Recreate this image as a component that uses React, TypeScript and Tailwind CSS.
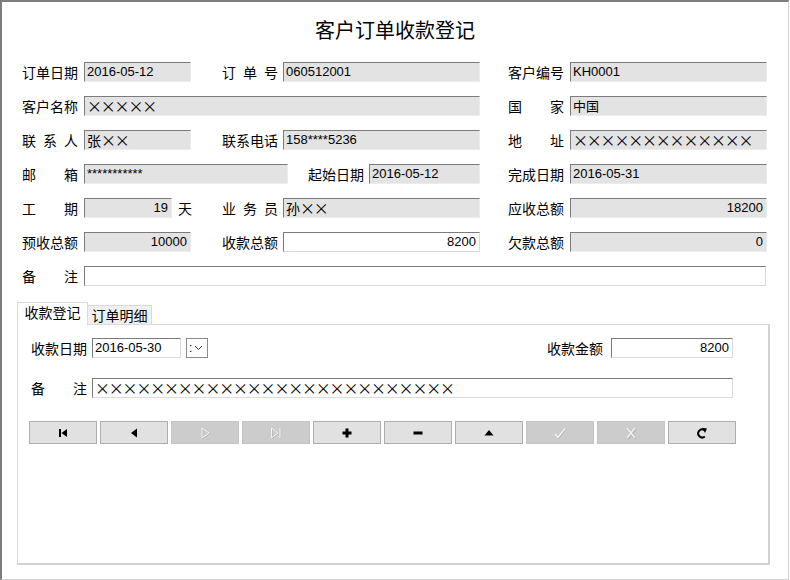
import React from 'react'

const CJK = "font-['Noto_Sans_CJK_SC','Liberation_Sans',sans-serif]"
const TXT = "font-['Liberation_Sans','Noto_Sans_CJK_SC',sans-serif]"

// label spread over 56px like the old WinForms forms
function Label({ text, className = '' }: { text: string; className?: string }) {
  return (
    <div className={`flex h-[20px] w-[56px] shrink-0 items-center justify-between text-[14px] leading-[20px] text-black ${CJK} ${className}`}>
      {text.split('').map((c, i) => (
        <span key={i}>{c}</span>
      ))}
    </div>
  )
}

function Xs({ n }: { n: number }) {
  return (
    <span className="font-['Noto_Sans_CJK_SC',sans-serif] text-[15px] leading-[18px] tracking-[-1.2px] text-black">
      {'×'.repeat(n)}
    </span>
  )
}

interface BoxProps {
  width: string
  value?: React.ReactNode
  right?: boolean
  white?: boolean
  className?: string
}

function Box({ width, value, right, white, className = '' }: BoxProps) {
  return (
    <div
      className={`flex h-[20px] shrink-0 items-center overflow-hidden whitespace-nowrap border-t border-l border-t-[#7b7b7b] border-l-[#7b7b7b] border-r border-b px-[2px] text-[13px] leading-[18px] text-black ${TXT} ${
        white ? 'bg-white border-r-[#dadada] border-b-[#dadada]' : 'bg-[#e3e3e3] border-r-[#ececec] border-b-[#ececec]'
      } ${right ? 'justify-end pr-[3px]' : ''} ${width} ${className}`}
    >
      {value}
    </div>
  )
}

function Icon({ kind }: { kind: string }) {
  const off = '#f4f4f4'
  switch (kind) {
    case 'first':
      return (
        <svg width="10" height="10" viewBox="0 0 10 10">
          <rect x="1" y="1" width="2" height="8" fill="#000" />
          <polygon points="9,1 9,9 3.5,5" fill="#000" />
        </svg>
      )
    case 'prev':
      return (
        <svg width="10" height="10" viewBox="0 0 10 10">
          <polygon points="8,0.5 8,9.5 2,5" fill="#000" />
        </svg>
      )
    case 'next':
      return (
        <svg width="12" height="12" viewBox="0 0 12 12">
          <polygon points="3,1 3,11 10,6" fill="none" stroke="#b5b5b5" strokeWidth="1" transform="translate(0.7 0.7)" />
          <polygon points="3,1 3,11 10,6" fill="none" stroke={off} strokeWidth="1" />
        </svg>
      )
    case 'last':
      return (
        <svg width="12" height="12" viewBox="0 0 12 12">
          <g transform="translate(0.7 0.7)" stroke="#b5b5b5" fill="none">
            <polygon points="1.5,1 1.5,11 8,6" />
            <line x1="10" y1="1" x2="10" y2="11" />
          </g>
          <g stroke={off} fill="none">
            <polygon points="1.5,1 1.5,11 8,6" />
            <line x1="10" y1="1" x2="10" y2="11" />
          </g>
        </svg>
      )
    case 'add':
      return (
        <svg width="10" height="10" viewBox="0 0 10 10">
          <rect x="3.5" y="0.5" width="3" height="9" fill="#000" />
          <rect x="0.5" y="3.5" width="9" height="3" fill="#000" />
        </svg>
      )
    case 'del':
      return (
        <svg width="10" height="10" viewBox="0 0 10 10">
          <rect x="0.5" y="3.5" width="9" height="3" fill="#000" />
        </svg>
      )
    case 'up':
      return (
        <svg width="10" height="10" viewBox="0 0 10 10">
          <polygon points="0.5,7.5 9.5,7.5 5,2" fill="#000" />
        </svg>
      )
    case 'ok':
      return (
        <svg width="14" height="14" viewBox="0 0 14 14">
          <path d="M2 8 L5 11.5 L12 2.5" fill="none" stroke="#b5b5b5" strokeWidth="1.4" transform="translate(0.7 0.7)" />
          <path d="M2 8 L5 11.5 L12 2.5" fill="none" stroke={off} strokeWidth="1.4" />
        </svg>
      )
    case 'cancel':
      return (
        <svg width="14" height="14" viewBox="0 0 14 14">
          <path d="M3 2 L11 12 M11 2 L3 12" fill="none" stroke="#b5b5b5" strokeWidth="2.2" transform="translate(0.7 0.7)" />
          <path d="M3 2 L11 12 M11 2 L3 12" fill="none" stroke={off} strokeWidth="1.4" />
        </svg>
      )
    default:
      return (
        <svg width="12" height="12" viewBox="0 0 12 12">
          <path d="M8.5 3.2 A4 4 0 1 0 8.8 9.5" fill="none" stroke="#000" strokeWidth="2" />
          <polygon points="6,0.8 11,1.5 9,6" fill="#000" />
        </svg>
      )
  }
}

const buttons = [
  { kind: 'first', on: true },
  { kind: 'prev', on: true },
  { kind: 'next', on: false },
  { kind: 'last', on: false },
  { kind: 'add', on: true },
  { kind: 'del', on: true },
  { kind: 'up', on: true },
  { kind: 'ok', on: false },
  { kind: 'cancel', on: false },
  { kind: 'refresh', on: true },
]

export default function App() {
  return (
    <div className="h-[580px] w-[789px] overflow-hidden border-t-2 border-l-2 border-r border-b border-t-[#7d7d7d] border-l-[#7d7d7d] border-r-[#d0d0d0] border-b-[#d0d0d0] bg-white">
      <div className={`mt-[16px] h-[24px] text-center text-[20px] leading-[24px] text-black ${CJK}`}>客户订单收款登记</div>

      <div className="mt-[20px] flex flex-col gap-[14px] pl-[20px]">
        <div className="flex items-center">
          <Label text="订单日期" />
          <Box width="w-[107px]" className="ml-[6px]" value="2016-05-12" />
          <Label text="订单号" className="ml-[31px]" />
          <Box width="w-[197px]" className="ml-[5px]" value="060512001" />
          <Label text="客户编号" className="ml-[28px]" />
          <Box width="w-[197px]" className="ml-[6px]" value="KH0001" />
        </div>

        <div className="flex items-center">
          <Label text="客户名称" />
          <Box width="w-[396px]" className="ml-[6px]" value={<Xs n={5} />} />
          <Label text="国家" className="ml-[28px]" />
          <Box width="w-[197px]" className="ml-[6px]" value={<span className={CJK}>中国</span>} />
        </div>

        <div className="flex items-center">
          <Label text="联系人" />
          <Box width="w-[107px]" className="ml-[6px]" value={<><span className={`${CJK} text-[14px]`}>张</span><Xs n={2} /></>} />
          <Label text="联系电话" className="ml-[31px]" />
          <Box width="w-[197px]" className="ml-[5px]" value="158****5236" />
          <Label text="地址" className="ml-[28px]" />
          <Box width="w-[197px]" className="ml-[6px]" value={<Xs n={13} />} />
        </div>

        <div className="flex items-center">
          <Label text="邮箱" />
          <Box width="w-[204px]" className="ml-[6px]" value="***********" />
          <Label text="起始日期" className="ml-[20px]" />
          <Box width="w-[111px]" className="ml-[5px]" value="2016-05-12" />
          <Label text="完成日期" className="ml-[28px]" />
          <Box width="w-[197px]" className="ml-[6px]" value="2016-05-31" />
        </div>

        <div className="flex items-center">
          <Label text="工期" />
          <Box width="w-[88px]" className="ml-[6px]" right value="19" />
          <span className={`ml-[6px] w-[14px] text-[14px] leading-[20px] ${CJK}`}>天</span>
          <Label text="业务员" className="ml-[30px]" />
          <Box width="w-[197px]" className="ml-[5px]" value={<><span className={`${CJK} text-[14px]`}>孙</span><Xs n={2} /></>} />
          <Label text="应收总额" className="ml-[28px]" />
          <Box width="w-[197px]" className="ml-[6px]" right value="18200" />
        </div>

        <div className="flex items-center">
          <Label text="预收总额" />
          <Box width="w-[107px]" className="ml-[6px]" right value="10000" />
          <Label text="收款总额" className="ml-[31px]" />
          <Box width="w-[197px]" className="ml-[5px]" white right value="8200" />
          <Label text="欠款总额" className="ml-[28px]" />
          <Box width="w-[197px]" className="ml-[6px]" right value="0" />
        </div>

        <div className="flex items-center">
          <Label text="备注" />
          <Box width="w-[682px]" className="ml-[6px]" white />
        </div>
      </div>

      {/* tabs */}
      <div className="ml-[15px] mt-[16px] w-[753px]">
        <div className={`flex h-[22px] items-end text-[14px] ${CJK}`}>
          <div className="relative z-10 -mb-px flex h-[23px] w-[71px] items-center justify-center border border-b-0 border-[#d9d9d9] bg-white pb-[3px] text-black">收款登记</div>
          <div className="flex h-[19px] w-[64px] items-center justify-center border border-l-0 border-b-0 border-[#d9d9d9] bg-[#f0f0f0] text-black">订单明细</div>
        </div>
        <div className="h-[241px] border-t border-l border-t-[#d9d9d9] border-l-[#d9d9d9] border-r-2 border-b-2 border-r-[#d2d2d2] border-b-[#d2d2d2] pl-[11px] pt-[13px]">
          <div className="ml-[2px] flex w-[702px] items-center">
            <Label text="收款日期" />
            <Box width="w-[89px]" className="ml-[5px]" white value="2016-05-30" />
            <div className={`ml-[5px] flex h-[20px] w-[22px] items-center gap-[2px] border border-[#8a8a8a] bg-white pl-[2px] text-[12px] ${TXT}`}>
              <span className="leading-[16px]">:</span>
              <svg width="9" height="6" viewBox="0 0 9 6">
                <path d="M1 1 L4.5 4.5 L8 1" fill="none" stroke="#333" strokeWidth="1" />
              </svg>
            </div>
            <Label text="收款金额" className="ml-auto" />
            <Box width="w-[122px]" className="ml-[8px]" white right value="8200" />
          </div>

          <div className="ml-[2px] mt-[20px] flex items-center">
            <Label text="备注" />
            <Box width="w-[641px]" className="ml-[5px]" white value={<Xs n={26} />} />
          </div>

          <div className="mt-[23px] flex gap-[3px]">
            {buttons.map(b => (
              <div
                key={b.kind}
                className={`flex h-[23px] w-[68px] items-center justify-center border ${
                  b.on ? 'border-[#adadad] bg-[#e1e1e1]' : 'border-[#c4c4c4] bg-[#cccccc]'
                }`}
              >
                <Icon kind={b.kind} />
              </div>
            ))}
          </div>
        </div>
      </div>
    </div>
  )
}
